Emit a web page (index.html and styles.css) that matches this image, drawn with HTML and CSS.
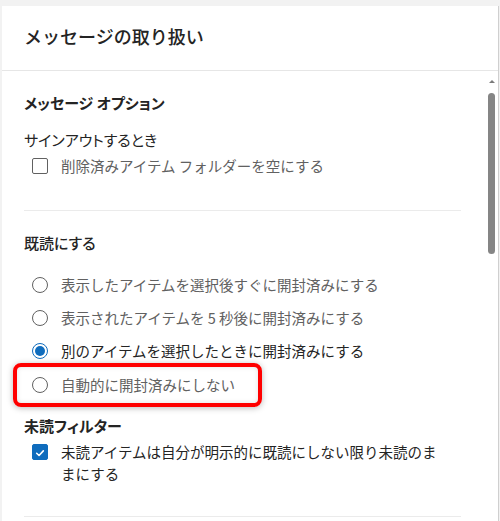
FILE: index.html
```html
<!DOCTYPE html>
<html lang="ja">
<head>
<meta charset="utf-8">
<title>メッセージの取り扱い</title>
<link rel="stylesheet" href="styles.css">
</head>
<body>
<div class="panel">
  <header class="header">
    <h1 class="title">メッセージの取り扱い</h1>
  </header>
  <div class="body">
    <div class="content">
      <section class="section">
        <h2 class="heading">メッセージ オプション</h2>
        <div class="sublabel">サインアウトするとき</div>
        <label class="row check-row">
          <span class="checkbox"></span>
          <span class="label muted">削除済みアイテム フォルダーを空にする</span>
        </label>
      </section>
      <hr class="divider">
      <section class="section">
        <h2 class="heading heading-regular">既読にする</h2>
        <div class="radio-group">
          <label class="row radio-row">
            <span class="radio"></span>
            <span class="label muted">表示したアイテムを選択後すぐに開封済みにする</span>
          </label>
          <label class="row radio-row">
            <span class="radio"></span>
            <span class="label muted">表示されたアイテムを 5 秒後に開封済みにする</span>
          </label>
          <label class="row radio-row">
            <span class="radio radio-on"></span>
            <span class="label">別のアイテムを選択したときに開封済みにする</span>
          </label>
          <label class="row radio-row highlighted">
            <span class="radio"></span>
            <span class="label muted">自動的に開封済みにしない</span>
          </label>
        </div>
        <h2 class="heading heading-filter">未読フィルター</h2>
        <label class="row check-row check-multi">
          <span class="checkbox checkbox-on">
            <svg viewBox="0 0 16 16" width="16" height="16"><path d="M4.2 8.3 L6.9 10.9 L11.8 5.6" fill="none" stroke="#fff" stroke-width="1.8" stroke-linecap="round" stroke-linejoin="round"/></svg>
          </span>
          <span class="label label-wrap">未読アイテムは自分が明示的に既読にしない限り未読のままにする</span>
        </label>
      </section>
      <hr class="divider divider-bottom">
    </div>
    <div class="scrollbar">
      <span class="scroll-arrow"></span>
      <span class="scroll-thumb"></span>
    </div>
  </div>
</div>
</body>
</html>
```
FILE: styles.css
```css
html, body {
  margin: 0;
  padding: 0;
}
body {
  width: 500px;
  height: 521px;
  overflow: hidden;
  background: #f2f2f2;
  font-family: "Noto Sans CJK JP", "Noto Sans", sans-serif;
  color: #242424;
}
.panel {
  margin: 6px 0 0 2px;
  width: 497px;
  height: 515px;
  background: #ffffff;
  border-right: 1px solid #cfcfcf;
  box-sizing: border-box;
  display: flex;
  flex-direction: column;
}
.header {
  height: 65px;
  border-bottom: 1px solid #e6e6e6;
  display: flex;
  align-items: center;
  padding-left: 22px;
  box-sizing: border-box;
  flex-shrink: 0;
}
.title {
  margin: 0;
  font-size: 18px;
  font-weight: 500;
  line-height: 24px;
  padding-bottom: 4px;
}
.body {
  flex: 1;
  display: flex;
  position: relative;
}
.content {
  width: 437px;
  padding: 21px 0 0 22px;
}
.section {
  display: flex;
  flex-direction: column;
}
.heading {
  margin: 0;
  font-size: 15px;
  font-weight: 700;
  line-height: 22px;
  font-feature-settings: "palt";
}
.heading-regular {
  font-weight: 500;
  margin-top: 0;
}
.heading-filter {
  margin-top: 13px;
}
.sublabel {
  margin-top: 15px;
  font-size: 15px;
  line-height: 22px;
  font-feature-settings: "palt";
}
.row {
  display: flex;
  align-items: flex-start;
  gap: 13px;
  padding-left: 8px;
  font-size: 14.5px;
  line-height: 22px;
}
.check-row {
  margin-top: 4px;
}
.check-multi {
  margin-top: 4px;
}
.label {
  color: #242424;
}
.muted {
  color: #616161;
}
.label-wrap {
  max-width: 384px;
}
.checkbox {
  width: 16px;
  height: 16px;
  box-sizing: border-box;
  border: 1px solid #616161;
  border-radius: 2px;
  margin-top: 3px;
  flex-shrink: 0;
  display: flex;
}
.checkbox-on {
  background: #0f6cbd;
  border-color: #0f6cbd;
}
.divider {
  border: none;
  border-top: 1px solid #ebebeb;
  margin: 33px 0 21px;
  height: 0;
}
.divider-bottom {
  margin-top: 31px;
}
.radio-group {
  margin-top: 14px;
  display: flex;
  flex-direction: column;
}
.radio-row {
  height: 33.4px;
  align-items: center;
  position: relative;
}
.radio {
  width: 16px;
  height: 16px;
  box-sizing: border-box;
  border: 1px solid #616161;
  border-radius: 50%;
  flex-shrink: 0;
  display: flex;
  align-items: center;
  justify-content: center;
}
.radio-on {
  border-color: #0f6cbd;
}
.radio-on::before {
  content: "";
  width: 10px;
  height: 10px;
  border-radius: 50%;
  background: #0f6cbd;
}
.highlighted::after {
  content: "";
  position: absolute;
  left: -11px;
  top: -5px;
  width: 249px;
  height: 44px;
  box-sizing: border-box;
  border: 4px solid #ff0000;
  border-radius: 8px;
  box-shadow: 0 1px 6px rgba(0, 0, 0, 0.28), inset 0 0 5px rgba(0, 0, 0, 0.12);
}
.scrollbar {
  position: absolute;
  right: 0;
  top: 0;
  width: 16px;
  height: 100%;
}
.scroll-arrow {
  position: absolute;
  left: 7px;
  top: 9px;
  width: 0;
  height: 0;
  border-left: 3px solid transparent;
  border-right: 3px solid transparent;
  border-bottom: 3px solid #7a7a7a;
}
.scroll-thumb {
  position: absolute;
  left: 6px;
  top: 22px;
  width: 7px;
  height: 161px;
  border-radius: 4px;
  background: #858585;
}
```
